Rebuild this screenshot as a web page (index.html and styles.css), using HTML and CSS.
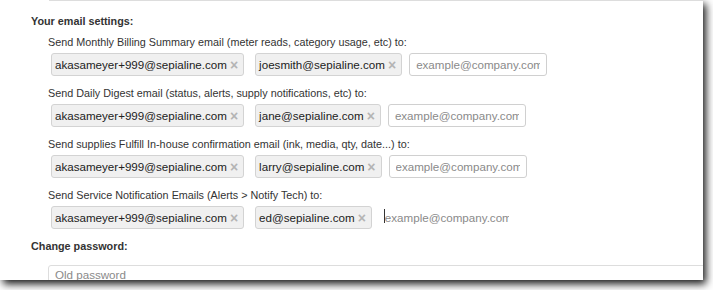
FILE: index.html
```html
<html>
	<head>
		<title>Account Settings</title>
		<meta charset="UTF-8">
		<meta name="viewport" content="width=device-width, initial-scale=1">
		<link rel="stylesheet" href="styles.css">
	</head>
	<body>
		<div class="frame">
			<div class="prev-field"></div>
			<h4 class="section-title">Your email settings:</h4>
			<div class="settings">
				<div class="setting">
					<div class="setting-label">Send Monthly Billing Summary email (meter reads, category usage, etc) to:</div>
					<div class="recipients">
						<span class="chip">akasameyer+999@sepialine.com<span class="chip-remove">&times;</span></span>
						<span class="chip">joesmith@sepialine.com<span class="chip-remove">&times;</span></span>
						<input class="recipient-input" type="text" placeholder="example@company.com" />
					</div>
				</div>
				<div class="setting">
					<div class="setting-label">Send Daily Digest email (status, alerts, supply notifications, etc) to:</div>
					<div class="recipients">
						<span class="chip">akasameyer+999@sepialine.com<span class="chip-remove">&times;</span></span>
						<span class="chip">jane@sepialine.com<span class="chip-remove">&times;</span></span>
						<input class="recipient-input" type="text" placeholder="example@company.com" />
					</div>
				</div>
				<div class="setting">
					<div class="setting-label">Send supplies Fulfill In-house confirmation email (ink, media, qty, date...) to:</div>
					<div class="recipients">
						<span class="chip">akasameyer+999@sepialine.com<span class="chip-remove">&times;</span></span>
						<span class="chip">larry@sepialine.com<span class="chip-remove">&times;</span></span>
						<input class="recipient-input" type="text" placeholder="example@company.com" />
					</div>
				</div>
				<div class="setting">
					<div class="setting-label">Send Service Notification Emails (Alerts &gt; Notify Tech) to:</div>
					<div class="recipients">
						<span class="chip">akasameyer+999@sepialine.com<span class="chip-remove">&times;</span></span>
						<span class="chip">ed@sepialine.com<span class="chip-remove">&times;</span></span>
						<span class="focus-wrap">
							<input class="recipient-input" type="text" placeholder="example@company.com" />
						</span>
					</div>
				</div>
			</div>
			<h4 class="section-title change-title">Change password:</h4>
			<input class="password-input" type="password" placeholder="Old password" />
		</div>
	</body>
</html>
```

FILE: styles.css
```css
body {
	margin: 0;
	background: #fff;
	color: #333;
	font-family: "Liberation Sans", Arial, sans-serif;
}
.frame {
	width: 703px;
	height: 280px;
	overflow: hidden;
	background: #fff;
	box-shadow: 3px 4px 8px rgba(0, 0, 0, 0.9);
}
.prev-field {
	height: 0;
	margin-left: 49px;
	border-bottom: 1px solid #ddd;
}
.section-title {
	margin: 12px 0 0 31px;
	font-size: 10.8px;
	line-height: 16px;
	font-weight: bold;
}
.change-title {
	margin-top: 9px;
}
.settings {
	display: flex;
	flex-direction: column;
	gap: 9px;
	margin: 5px 0 0 48px;
}
.setting-label {
	font-size: 10.8px;
	line-height: 16px;
}
.recipients {
	display: flex;
	align-items: center;
	margin: 3px 0 0 3px;
}
.chip {
	display: flex;
	align-items: center;
	height: 23px;
	box-sizing: border-box;
	padding: 0 5px 0 3px;
	background: #f0f0f0;
	border: 1px solid #d3d3d3;
	border-radius: 3px;
	font-size: 11.6px;
	color: #222;
	white-space: nowrap;
}
.chip + .chip {
	margin-left: 11px;
}
.chip-remove {
	margin-left: 3px;
	color: #b4b4b4;
	font-size: 14px;
	font-weight: bold;
}
.recipient-input {
	margin-left: 7px;
	width: 138px;
	height: 23px;
	box-sizing: border-box;
	border: 1px solid #d0d0d0;
	border-radius: 3px;
	padding: 0 6px;
	font: 11.6px "Liberation Sans", Arial, sans-serif;
	color: #333;
	outline: none;
}
.recipient-input::placeholder {
	color: #8a8a8a;
}
.focus-wrap {
	position: relative;
	display: flex;
	margin-left: 6px;
}
.focus-wrap .recipient-input {
	margin-left: 0;
	border-color: transparent;
}
.focus-wrap::before {
	content: "";
	position: absolute;
	left: 6px;
	top: 3px;
	width: 1px;
	height: 14px;
	background: #333;
}
.password-input {
	display: block;
	margin: 11px 0 0 48px;
	width: 680px;
	height: 28px;
	box-sizing: border-box;
	border: 1px solid #ddd;
	border-radius: 3px;
	padding: 0 6px 10px;
	font: 11.6px "Liberation Sans", Arial, sans-serif;
	outline: none;
}
.password-input::placeholder {
	color: #8a8a8a;
}
```
